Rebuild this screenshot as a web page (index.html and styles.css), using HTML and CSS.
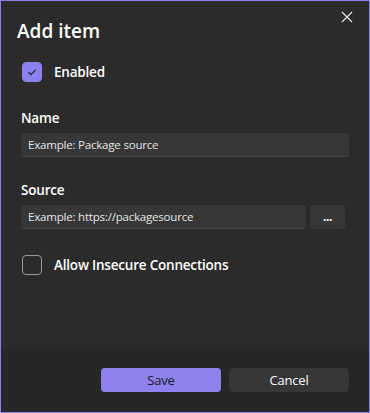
FILE: index.html
```html
<!DOCTYPE html>
<html lang="en">
<head>
    <meta charset="UTF-8">
    <title>Add item</title>
    <link rel="stylesheet" href="styles.css">
</head>
<body>

<div class="dialog">
    <button class="close-btn" aria-label="Close">
        <svg width="12" height="12" viewBox="0 0 12 12"><path d="M1 1 L11 11 M11 1 L1 11" stroke="#e8e8e8" stroke-width="1.2" fill="none"/></svg>
    </button>

    <div class="content">
        <h1>Add item</h1>

        <label class="check-row">
            <span class="check checked">
                <svg width="12" height="12" viewBox="0 0 12 12"><path d="M2.5 6.2 L5 8.6 L9.8 3.6" stroke="#1c1c1c" stroke-width="1.1" fill="none"/></svg>
            </span>
            <span class="check-label">Enabled</span>
        </label>

        <div class="field">
            <div class="field-label">Name</div>
            <div class="input">Example: Package source</div>
        </div>

        <div class="field">
            <div class="field-label">Source</div>
            <div class="input-row">
                <div class="input">Example: https://packagesource</div>
                <button class="browse-btn">...</button>
            </div>
        </div>

        <label class="check-row insecure">
            <span class="check"></span>
            <span class="check-label">Allow Insecure Connections</span>
        </label>
    </div>

    <div class="footer">
        <button class="btn primary">Save</button>
        <button class="btn">Cancel</button>
    </div>
</div>

</body>
</html>
```

FILE: styles.css
```css
body {
    margin: 0;
    padding: 0;
    background: #2b2b2b;
    font-family: "Open Sans", "Noto Sans", Arial, sans-serif;
    color: #ffffff;
}

.dialog {
    position: relative;
    width: 370px;
    height: 413px;
    box-sizing: border-box;
    border: 1px solid #8b80f0;
    background: #2b2b2b;
    display: flex;
    flex-direction: column;
}

.close-btn {
    position: absolute;
    top: 10px;
    right: 16px;
    width: 12px;
    height: 12px;
    padding: 0;
    border: none;
    background: none;
    display: flex;
}

.content {
    flex: 1;
    padding: 16px 20px 0 20px;
}

h1 {
    margin: 0 0 0 -4px;
    font-size: 19px;
    font-weight: 600;
    line-height: 28px;
}

.check-row {
    display: flex;
    align-items: center;
    margin-top: 17px;
    margin-left: 1px;
    height: 20px;
}

.check {
    width: 18px;
    height: 18px;
    border: 1px solid #9a9a9a;
    border-radius: 4px;
    box-sizing: content-box;
    display: flex;
    align-items: center;
    justify-content: center;
    flex-shrink: 0;
}

.check.checked {
    background: #8b80f0;
    border-color: #8b80f0;
}

.check-label {
    margin-left: 12px;
    font-size: 13.5px;
    font-weight: 600;
    letter-spacing: -0.2px;
    line-height: 20px;
}

.field {
    margin-top: 26px;
}

.field + .field {
    margin-top: 23px;
}

.field-label {
    font-size: 13.5px;
    font-weight: 600;
    letter-spacing: -0.2px;
    line-height: 20px;
    margin-bottom: 5px;
}

.input {
    flex: 1;
    height: 24px;
    box-sizing: border-box;
    background: #373737;
    border-radius: 4px;
    border-bottom: 1px solid #4a4a4a;
    font-size: 11.5px;
    letter-spacing: -0.2px;
    line-height: 23px;
    padding-left: 7px;
    color: #e6e6e6;
}

.input-row {
    display: flex;
    gap: 4px;
}

.browse-btn {
    width: 35px;
    height: 24px;
    border: none;
    border-radius: 4px;
    background: #373737;
    color: #ffffff;
    font-family: "Open Sans", "Noto Sans", Arial, sans-serif;
    font-size: 12px;
    font-weight: 700;
    letter-spacing: -0.5px;
    padding: 0 0 2px 0;
    margin-right: 4px;
}

.insecure {
    margin-top: 26px;
}

.footer {
    height: 64px;
    background: #272727;
    display: flex;
    justify-content: flex-end;
    align-items: center;
    gap: 8px;
    padding: 0 20px 0 0;
}

.btn {
    width: 120px;
    height: 24px;
    border: none;
    border-radius: 4px;
    background: #363636;
    color: #ffffff;
    font-family: "Open Sans", "Noto Sans", Arial, sans-serif;
    font-size: 13px;
    letter-spacing: -0.2px;
}

.btn.primary {
    background: #8f82ee;
    color: #1a1a1a;
}
```
